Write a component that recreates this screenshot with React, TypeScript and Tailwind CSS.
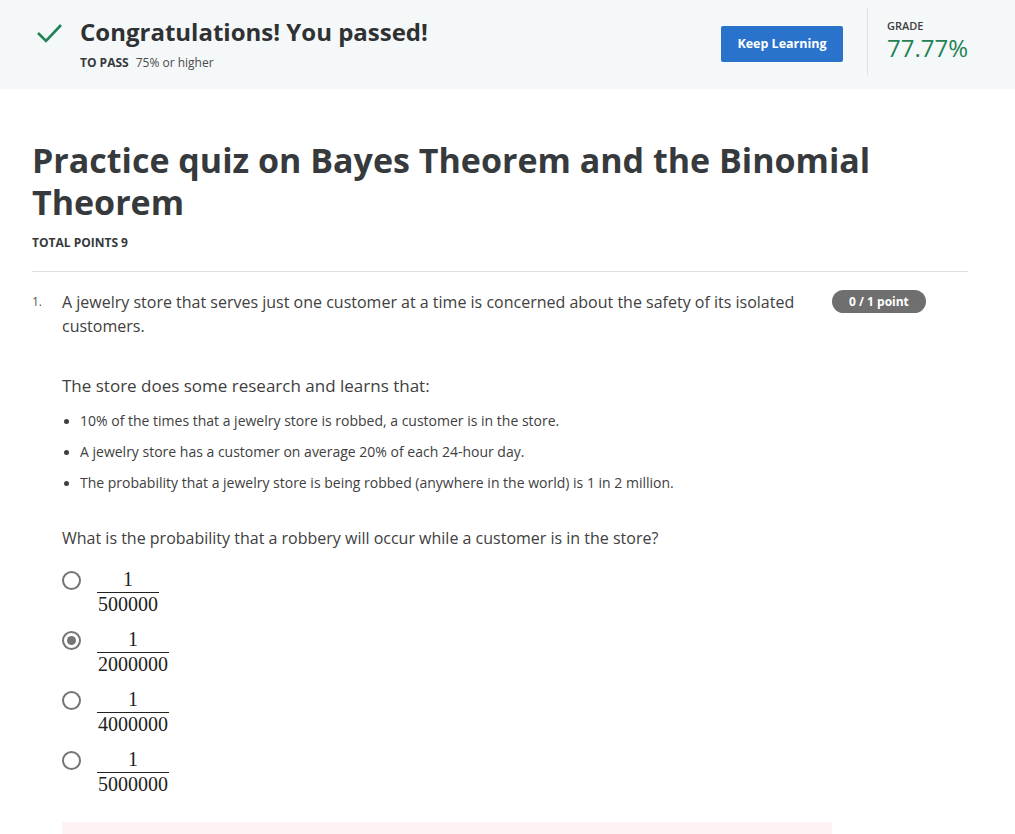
import React from "react";

const options = [
  { den: "500000", selected: false },
  { den: "2000000", selected: true },
  { den: "4000000", selected: false },
  { den: "5000000", selected: false },
];

const facts = [
  "10% of the times that a jewelry store is robbed, a customer is in the store.",
  "A jewelry store has a customer on average 20% of each 24-hour day.",
  "The probability that a jewelry store is being robbed (anywhere in the world) is 1 in 2 million.",
];

function Radio({ selected }: { selected: boolean }) {
  return (
    <div className="w-[19px] h-[19px] rounded-full border-2 border-[#757575] flex items-center justify-center bg-white shrink-0">
      {selected && <div className="w-[9px] h-[9px] rounded-full bg-[#757575]" />}
    </div>
  );
}

function Fraction({ den }: { den: string }) {
  return (
    <div
      className="inline-flex flex-col items-center text-[20px] leading-[20px] text-[#222]"
      style={{ fontFamily: '"Liberation Serif", "DejaVu Serif", serif' }}
    >
      <span className="px-[1px]">1</span>
      <span className="block w-full border-t border-[#222] mt-[3px]" />
      <span className="px-[1px] mt-[1px]">{den}</span>
    </div>
  );
}

export default function App() {
  return (
    <div
      className="min-h-screen bg-white text-[#373a3c]"
      style={{ fontFamily: '"Open Sans", "Noto Sans", sans-serif' }}
    >
      <header className="bg-[#f5f8f8] h-[89px] flex">
        <div className="flex-1 flex pl-[36px] pt-[16px]">
          <svg width="27" height="22" viewBox="0 0 27 22" className="mt-[6px]">
            <path d="M2 11 L10 19 L25 3" fill="none" stroke="#1f8354" strokeWidth="2.6" />
          </svg>
          <div className="ml-[17px]">
            <h1 className="text-[24px] leading-[32px] font-bold text-[#2f3133]">
              Congratulations! You passed!
            </h1>
            <div className="text-[12px] mt-[6px]">
              <span className="font-bold mr-[7px]">TO PASS</span>
              <span className="text-[#4a4a4a]">75% or higher</span>
            </div>
          </div>
        </div>
        <div className="flex items-start pt-[26px] pr-[24px]">
          <button className="bg-[#2a73cc] text-white text-[12.5px] font-bold rounded-[2px] w-[122px] h-[36px]">
            Keep Learning
          </button>
        </div>
        <div className="border-l border-[#e1e3e3] mt-[8px] h-[67px] w-[148px] pl-[19px] pt-[11px]">
          <div className="text-[11px] font-semibold leading-[14px] text-[#3d3d3d]">GRADE</div>
          <div className="text-[24px] leading-[30px] text-[#1f8354]">77.77%</div>
        </div>
      </header>

      <main className="px-[32px] w-[1000px]">
        <h2 className="mt-[50px] text-[34px] leading-[42px] font-bold text-[#373a3c] w-[880px]">
          Practice quiz on Bayes Theorem and the Binomial Theorem
        </h2>
        <div className="mt-[11px] text-[12px] font-bold">TOTAL POINTS 9</div>
        <hr className="mt-[19px] border-t border-[#e0e0e0]" />

        <div className="flex mt-[18px]">
          <div className="w-[30px] text-[12px] leading-[24px] text-[#555]">1.</div>
          <div className="flex-1">
            <div className="flex">
              <p className="text-[16px] leading-[24px] w-[740px] text-[#404040]">
                A jewelry store that serves just one customer at a time is concerned about the safety of its isolated
                customers.
              </p>
              <div className="ml-[30px] mt-[0px] h-[23px] px-[17px] rounded-full bg-[#6f6f6f] text-white text-[12px] font-bold flex items-center">
                0 / 1 point
              </div>
            </div>
            <p className="mt-[36px] text-[17px] leading-[24px] text-[#404040]">
              The store does some research and learns that:
            </p>
            <ul className="mt-[13px] flex flex-col gap-[11px]">
              {facts.map((f) => (
                <li key={f} className="flex items-center text-[14px] leading-[20px] text-[#404040]">
                  <span className="w-[5px] h-[5px] rounded-full bg-[#404040] ml-[2px] mr-[11px]" />
                  {f}
                </li>
              ))}
            </ul>
            <p className="mt-[33px] text-[16px] leading-[24px] text-[#404040]">
              What is the probability that a robbery will occur while a customer is in the store?
            </p>
            <div className="mt-[18px] flex flex-col gap-[14px]">
              {options.map((o) => (
                <div key={o.den} className="flex items-start">
                  <div className="pt-[3px]">
                    <Radio selected={o.selected} />
                  </div>
                  <div className="ml-[16px]">
                    <Fraction den={o.den} />
                  </div>
                </div>
              ))}
            </div>
            <div className="mt-[28px] w-[770px] h-[40px] bg-[#fdf3f3]" />
          </div>
        </div>
      </main>
    </div>
  );
}
